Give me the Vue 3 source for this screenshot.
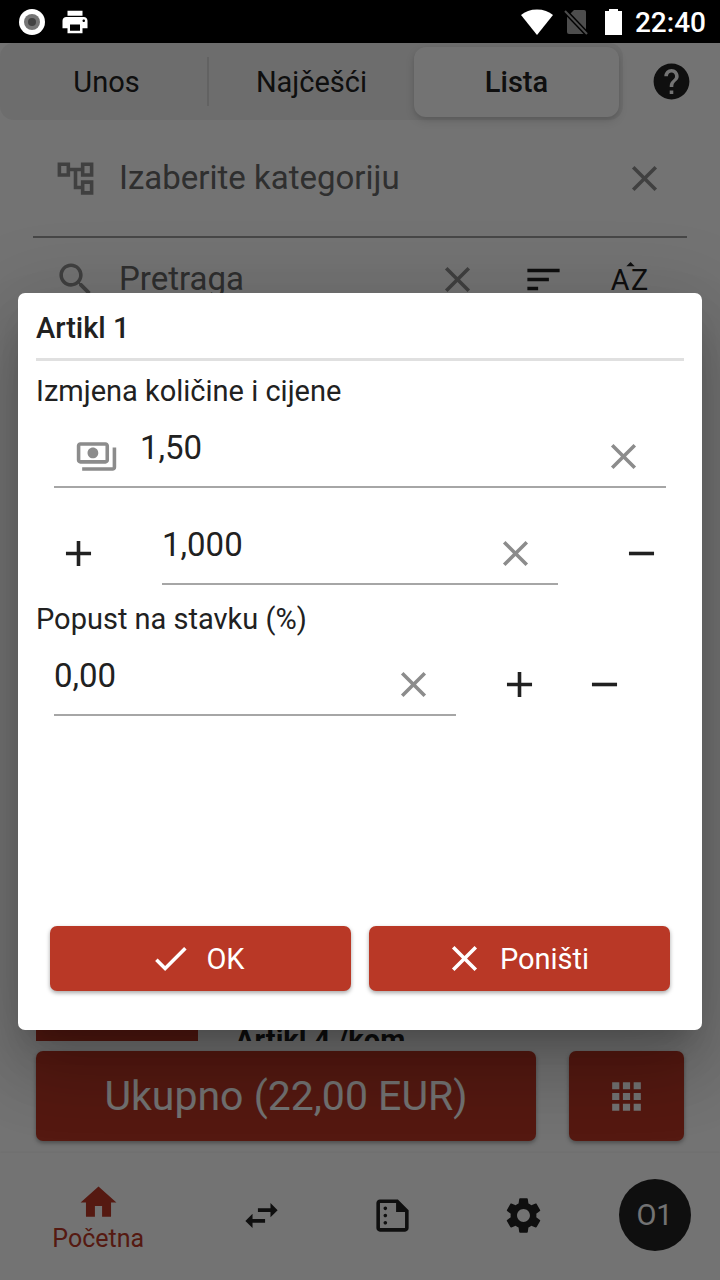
<script setup>
import { ref } from 'vue'

const price = ref('1,50')
const quantity = ref('1,000')
const discount = ref('0,00')
const category = ref('')
const search = ref('')
const activeTab = ref('Lista')
const tabs = ['Unos', 'Najčešći', 'Lista']

const icons = {
  close: 'M19 6.41 17.59 5 12 10.59 6.41 5 5 6.41 10.59 12 5 17.59 6.41 19 12 13.41 17.59 19 19 17.59 13.41 12z',
  add: 'M19 13h-6v6h-2v-6H5v-2h6V5h2v6h6z',
  remove: 'M19 13H5v-2h14z',
  check: 'M9 16.17 4.83 12l-1.42 1.41L9 19 21 7l-1.41-1.41z',
  help: 'M12 2C6.48 2 2 6.48 2 12s4.48 10 10 10 10-4.48 10-10S17.52 2 12 2zm1 17h-2v-2h2v2zm2.07-7.75-.9.92C13.45 12.9 13 13.5 13 15h-2v-.5c0-1.1.45-2.1 1.17-2.83l1.24-1.26c.37-.36.59-.86.59-1.41 0-1.1-.9-2-2-2s-2 .9-2 2H8c0-2.21 1.79-4 4-4s4 1.79 4 4c0 .88-.36 1.68-.93 2.25z',
  tree: 'M22 11V3h-7v3H9V3H2v8h7V8h2v10h4v3h7v-8h-7v3h-2V8h2v3h7zM7 9H4V5h3v4zm10 6h3v4h-3v-4zm0-10h3v4h-3V5z',
  search: 'M15.5 14h-.79l-.28-.27C15.41 12.59 16 11.11 16 9.5 16 5.91 13.09 3 9.5 3S3 5.91 3 9.5 5.91 16 9.5 16c1.61 0 3.09-.59 4.23-1.57l.27.28v.79l5 4.99L20.49 19l-4.99-5zm-6 0C7.01 14 5 11.99 5 9.5S7.01 5 9.5 5 14 7.01 14 9.5 11.99 14 9.5 14z',
  sort: 'M3 18h6v-2H3v2zM3 6v2h18V6H3zm0 7h12v-2H3v2z',
  payments: 'M19 14V6c0-1.1-.9-2-2-2H3c-1.1 0-2 .9-2 2v8c0 1.1.9 2 2 2h14c1.1 0 2-.9 2-2zm-2 0H3V6h14v8zm-7-7c-1.66 0-3 1.34-3 3s1.34 3 3 3 3-1.34 3-3-1.34-3-3-3zm13 0v11c0 1.1-.9 2-2 2H4v-2h17V7h2z',
  apps: 'M4 8h4V4H4v4zm6 12h4v-4h-4v4zm-6 0h4v-4H4v4zm0-6h4v-4H4v4zm6 0h4v-4h-4v4zm6-10v4h4V4h-4zm-6 4h4V4h-4v4zm6 6h4v-4h-4v4zm0 6h4v-4h-4v4z',
  home: 'M10 20v-6h4v6h5v-8h3L12 3 2 12h3v8z',
  swap: 'M6.99 11 3 15l3.99 4v-3H14v-2H6.99v-3zM21 9l-3.99-4v3H10v2h7.01v3L21 9z',
  report: 'M15 3H5c-1.1 0-2 .9-2 2v14c0 1.1.9 2 2 2h14c1.1 0 2-.9 2-2V9l-6-6zM5 19V5h9v5h5v9H5zM9 8c0 .55-.45 1-1 1s-1-.45-1-1 .45-1 1-1 1 .45 1 1zm0 4c0 .55-.45 1-1 1s-1-.45-1-1 .45-1 1-1 1 .45 1 1zm0 4c0 .55-.45 1-1 1s-1-.45-1-1 .45-1 1-1 1 .45 1 1z',
  settings: 'M19.14 12.94c.04-.3.06-.61.06-.94 0-.32-.02-.64-.07-.94l2.03-1.58c.18-.14.23-.41.12-.61l-1.92-3.32c-.12-.22-.37-.29-.59-.22l-2.39.96c-.5-.38-1.03-.7-1.62-.94l-.36-2.54c-.04-.24-.24-.41-.48-.41h-3.84c-.24 0-.43.17-.47.41l-.36 2.54c-.59.24-1.13.57-1.62.94l-2.39-.96c-.22-.08-.47 0-.59.22L2.74 8.87c-.12.21-.08.47.12.61l2.03 1.58c-.05.3-.09.63-.09.94s.02.64.07.94l-2.03 1.58c-.18.14-.23.41-.12.61l1.92 3.32c.12.22.37.29.59.22l2.39-.96c.5.38 1.03.7 1.62.94l.36 2.54c.05.24.24.41.48.41h3.84c.24 0 .44-.17.47-.41l.36-2.54c.59-.24 1.13-.56 1.62-.94l2.39.96c.22.08.47 0 .59-.22l1.92-3.32c.12-.22.07-.47-.12-.61l-2.01-1.58zM12 15.6c-1.98 0-3.6-1.62-3.6-3.6s1.62-3.6 3.6-3.6 3.6 1.62 3.6 3.6-1.62 3.6-3.6 3.6z',
  print: 'M19 8H5c-1.66 0-3 1.34-3 3v6h4v4h12v-4h4v-6c0-1.66-1.34-3-3-3zm-3 11H8v-5h8v5zm3-7c-.55 0-1-.45-1-1s.45-1 1-1 1 .45 1 1-.45 1-1 1zm-1-9H6v4h12V3z'
}
</script>

<template>
  <div class="page">
    <header class="status">
      <svg class="s-icon" viewBox="0 0 26 26" aria-hidden="true">
        <circle cx="13" cy="13" r="13" fill="#fff" />
        <circle cx="13" cy="13" r="8" fill="#757575" />
        <circle cx="13" cy="13" r="4" fill="#424242" />
      </svg>
      <svg class="s-print" viewBox="0 0 24 24" aria-hidden="true"><path :d="icons.print" /></svg>
      <span class="spacer"></span>
      <svg class="s-wifi" viewBox="0 0 32 26" aria-hidden="true"><path d="M16 26 0 6C4 2.500 9.500.5 16 .5S28 2.500 32 6z" /></svg>
      <svg class="s-sim" viewBox="0 0 24 26" aria-hidden="true">
        <path d="M10 1h10q2 0 2 2v21q0 1-1 1H5q-2 0-2-2V8z" fill="#4d4d4d" />
        <path d="M1 2 23 25" stroke="#000" stroke-width="5" />
        <path d="M1 2 23 25" stroke="#4d4d4d" stroke-width="2" />
      </svg>
      <svg class="s-batt" viewBox="0 0 17 26" aria-hidden="true"><path d="M4 0h9v2h4v24H0V2h4z" /></svg>
      <time class="clock">22:40</time>
    </header>

    <div class="screen">
      <main class="app">
        <div class="top">
          <div class="tabs" role="tablist">
            <button
              v-for="t in tabs"
              :key="t"
              type="button"
              role="tab"
              class="tab"
              :class="{ active: t === activeTab }"
              :aria-selected="t === activeTab"
              @click="activeTab = t"
            >{{ t }}</button>
          </div>
          <button type="button" class="icon-btn dark" aria-label="Pomoć">
            <svg class="icon" viewBox="0 0 24 24"><path :d="icons.help" /></svg>
          </button>
        </div>

        <div class="filter category">
          <svg class="icon" viewBox="0 0 24 24" aria-hidden="true"><path :d="icons.tree" /></svg>
          <input v-model="category" class="filter-input" type="text" placeholder="Izaberite kategoriju" aria-label="Izaberite kategoriju" />
          <button type="button" class="icon-btn" aria-label="Obriši" @click="category = ''">
            <svg class="icon" viewBox="0 0 24 24"><path :d="icons.close" /></svg>
          </button>
        </div>
        <div class="filter search">
          <svg class="icon" viewBox="0 0 24 24" aria-hidden="true"><path :d="icons.search" /></svg>
          <input v-model="search" class="filter-input" type="text" placeholder="Pretraga" aria-label="Pretraga" />
          <div class="actions">
            <button type="button" class="icon-btn" aria-label="Obriši" @click="search = ''">
              <svg class="icon" viewBox="0 0 24 24"><path :d="icons.close" /></svg>
            </button>
            <button type="button" class="icon-btn dark" aria-label="Poredaj">
              <svg class="icon" viewBox="0 0 24 24"><path :d="icons.sort" /></svg>
            </button>
            <button type="button" class="icon-btn dark" aria-label="Poredaj po abecedi">
              <svg class="icon az" viewBox="0 0 24 24">
                <path d="M14.940 4.660h-4.720l2.360-2.360z" />
                <text x="1.500" y="17.700">A</text>
                <text x="12.800" y="17.700">Z</text>
              </svg>
            </button>
          </div>
        </div>

        <div class="list">
          <div class="item">
            <div class="thumb"></div>
            <strong class="item-name">Artikl 4 /kom</strong>
          </div>
        </div>

        <div class="totals">
          <button type="button" class="primary total">Ukupno (22,00 EUR)</button>
          <button type="button" class="primary grid-btn" aria-label="Mreža">
            <svg class="icon" viewBox="0 0 24 24"><path :d="icons.apps" /></svg>
          </button>
        </div>

        <nav class="nav">
          <a href="#" class="nav-item home">
            <svg class="icon" viewBox="0 0 24 24" aria-hidden="true"><path :d="icons.home" /></svg>
            <span>Početna</span>
          </a>
          <a href="#" class="nav-item" aria-label="Promet"><svg class="icon" viewBox="0 0 24 24"><path :d="icons.swap" /></svg></a>
          <a href="#" class="nav-item" aria-label="Izvještaji"><svg class="icon" viewBox="0 0 24 24"><path :d="icons.report" /></svg></a>
          <a href="#" class="nav-item" aria-label="Postavke"><svg class="icon" viewBox="0 0 24 24"><path :d="icons.settings" /></svg></a>
          <a href="#" class="nav-item"><span class="avatar">O1</span></a>
        </nav>
      </main>

      <div class="overlay">
        <section class="dialog" role="dialog" aria-modal="true" aria-labelledby="dialog-title">
          <h2 id="dialog-title" class="title">Artikl 1</h2>
          <hr class="rule" />
          <label class="label" for="price">Izmjena količine i cijene</label>
          <div class="field price">
            <svg class="icon lead" viewBox="0 0 24 24" aria-hidden="true"><path :d="icons.payments" /></svg>
            <input id="price" v-model="price" class="value" type="text" inputmode="decimal" />
            <button type="button" class="icon-btn" aria-label="Obriši" @click="price = ''">
              <svg class="icon" viewBox="0 0 24 24"><path :d="icons.close" /></svg>
            </button>
          </div>
          <div class="row quantity">
            <button type="button" class="icon-btn dark" aria-label="Povećaj količinu">
              <svg class="icon" viewBox="0 0 24 24"><path :d="icons.add" /></svg>
            </button>
            <div class="field">
              <input v-model="quantity" class="value" type="text" inputmode="decimal" aria-label="Količina" />
              <button type="button" class="icon-btn" aria-label="Obriši" @click="quantity = ''">
                <svg class="icon" viewBox="0 0 24 24"><path :d="icons.close" /></svg>
              </button>
            </div>
            <button type="button" class="icon-btn dark" aria-label="Smanji količinu">
              <svg class="icon" viewBox="0 0 24 24"><path :d="icons.remove" /></svg>
            </button>
          </div>
          <label class="label" for="discount">Popust na stavku (%)</label>
          <div class="row discount">
            <div class="field">
              <input id="discount" v-model="discount" class="value" type="text" inputmode="decimal" />
              <button type="button" class="icon-btn" aria-label="Obriši" @click="discount = ''">
                <svg class="icon" viewBox="0 0 24 24"><path :d="icons.close" /></svg>
              </button>
            </div>
            <button type="button" class="icon-btn dark" aria-label="Povećaj popust">
              <svg class="icon" viewBox="0 0 24 24"><path :d="icons.add" /></svg>
            </button>
            <button type="button" class="icon-btn dark" aria-label="Smanji popust">
              <svg class="icon" viewBox="0 0 24 24"><path :d="icons.remove" /></svg>
            </button>
          </div>
          <div class="buttons">
            <button type="button" class="primary">
              <svg class="icon" viewBox="0 0 24 24" aria-hidden="true"><path :d="icons.check" /></svg>
              <span>OK</span>
            </button>
            <button type="button" class="primary">
              <svg class="icon" viewBox="0 0 24 24" aria-hidden="true"><path :d="icons.close" /></svg>
              <span>Poništi</span>
            </button>
          </div>
        </section>
      </div>
    </div>
  </div>
</template>

<style>
body {
  margin: 0;
}
</style>

<style scoped>
.page {
  display: flex;
  flex-direction: column;
  min-height: 100vh;
  font-family: Roboto, "Liberation Sans", sans-serif;
  font-size: 29px;
  line-height: 34px;
  color: #212121;
}
.page *,
.page {
  box-sizing: border-box;
}
button,
input {
  font: inherit;
  color: inherit;
  border: 0;
  background: none;
  padding: 0;
  margin: 0;
  outline: none;
}
button {
  cursor: pointer;
}
.icon {
  display: block;
  flex: none;
  width: 43px;
  height: 43px;
  fill: currentColor;
}
.icon-btn {
  flex: none;
  color: #8c8c8c;
}
.dark {
  color: #212121;
}

/* status bar */
.status {
  display: flex;
  align-items: center;
  height: 43px;
  padding: 0 14px 0 19px;
  background: #000;
  color: #fff;
  fill: #fff;
}
.s-icon {
  width: 26px;
  height: 26px;
}
.s-print {
  width: 30px;
  height: 30px;
  margin-left: 15px;
}
.spacer {
  flex: 1;
}
.s-wifi {
  width: 32px;
  height: 26px;
}
.s-sim {
  width: 24px;
  height: 26px;
  margin-left: 11px;
}
.s-batt {
  width: 17px;
  height: 26px;
  margin: 0 13px 0 17px;
}
.clock {
  font-size: 28px;
  font-weight: 500;
  padding-top: 3px;
}

/* app screen */
.screen {
  position: relative;
  flex: 1;
  display: flex;
  flex-direction: column;
}
.app {
  flex: 1;
  display: flex;
  flex-direction: column;
  background: #fafafa;
}
.top {
  display: flex;
  align-items: center;
  padding-right: 27px;
  gap: 27px;
}
.tabs {
  flex: 1;
  display: flex;
  height: 77px;
  padding: 4px 4px 3px;
  border-radius: 14px;
  background: #ededed;
}
.tab {
  flex: 1;
  position: relative;
  border-radius: 12px;
}
.tab:first-child::after {
  content: "";
  position: absolute;
  top: 10px;
  bottom: 11px;
  right: 0;
  width: 2px;
  background: #d6d6d6;
}
.tab.active {
  font-weight: 500;
  background: #fafafa;
  box-shadow: 0 4px 10px rgba(0, 0, 0, 0.12), 0 2px 4px rgba(0, 0, 0, 0.08);
}
.filter {
  display: flex;
  align-items: center;
  margin: 0 33px;
  padding: 0 21px;
  color: #8c8c8c;
}
.category {
  height: 118px;
  border-bottom: 2px solid #9c9c9c;
}
.search {
  height: 82px;
  padding-right: 36px;
}
.actions {
  display: flex;
  gap: 43px;
}
.filter-input {
  flex: 1;
  min-width: 0;
  margin-left: 22px;
  font-size: 33px;
  line-height: 40px;
}
.filter-input::placeholder {
  color: #666;
  opacity: 1;
}
.az {
  font-family: Roboto, sans-serif;
  font-size: 16px;
  font-weight: 400;
}
.list {
  flex: 1;
  display: flex;
  flex-direction: column;
  justify-content: flex-end;
  overflow: hidden;
}
.item {
  display: flex;
  gap: 37px;
  height: 18px;
  padding: 0 36px;
}
.thumb {
  width: 162px;
  background: #b93826;
}
.item-name {
  font-weight: 700;
}
.primary {
  display: flex;
  align-items: center;
  justify-content: center;
  border-radius: 7px;
  background: #b93826;
  color: #fff;
  box-shadow: 0 2px 4px rgba(0, 0, 0, 0.35);
}
.totals {
  display: flex;
  gap: 33px;
  padding: 10px 36px 12px;
  background: #fafafa;
  position: relative;
}
.totals .primary {
  height: 90px;
  color: #fafafa;
}
.total {
  flex: 1;
  font-size: 41px;
}
.grid-btn {
  width: 115px;
}
.nav {
  display: grid;
  grid-template-columns: 3fr 2fr 2fr 2fr 2fr;
  height: 127px;
  background: #fafafa;
  box-shadow: 0 -1px 2px rgba(0, 0, 0, 0.04);
  position: relative;
}
.nav-item {
  display: flex;
  flex-direction: column;
  align-items: center;
  justify-content: center;
  padding-bottom: 3px;
  color: #212121;
  text-decoration: none;
}
.home {
  padding-bottom: 0;
  color: #b93826;
  font-size: 25px;
  line-height: 29px;
}
.avatar {
  display: flex;
  align-items: center;
  justify-content: center;
  width: 72px;
  height: 72px;
  border-radius: 50%;
  background: #212121;
  color: #fafafa;
}

/* dialog */
.overlay {
  position: absolute;
  inset: 0;
  display: flex;
  align-items: center;
  padding: 18px;
  background: rgba(0, 0, 0, 0.54);
}
.dialog {
  flex: 1;
  min-width: 0;
  padding: 18px;
  border-radius: 7px;
  background: #fff;
  box-shadow:
    0 20px 27px -13px rgba(0, 0, 0, 0.2),
    0 43px 68px 5px rgba(0, 0, 0, 0.14),
    0 16px 83px 14px rgba(0, 0, 0, 0.12);
}
.title {
  margin: 0;
  font-size: 29px;
  font-weight: 500;
}
.rule {
  height: 3px;
  margin: 13px 0;
  border: 0;
  background: #e0e0e0;
}
.label {
  display: block;
}
.field {
  display: flex;
  align-items: flex-end;
  min-width: 0;
  height: 80px;
  padding-right: 21px;
  border-bottom: 2px solid #a6a6a6;
}
.field .icon-btn,
.lead {
  margin-bottom: 8px;
}
.value {
  flex: 1;
  align-self: stretch;
  min-width: 0;
  padding-top: 2px;
  font-size: 33px;
}
.price {
  margin: 0 18px;
  padding-left: 21px;
}
.lead {
  margin-right: 22px;
  color: #8c8c8c;
}
.row {
  display: flex;
  align-items: flex-end;
}
.row .field {
  flex: 1;
}
.row > .icon-btn {
  margin-bottom: 10px;
}
.quantity {
  gap: 62px;
  margin: 17px 21px;
}
.discount {
  gap: 42px;
  margin: 0 58px 0 18px;
}
.buttons {
  display: flex;
  gap: 18px;
  margin: 210px 14px 21px;
}
.buttons .primary {
  flex: 1;
  height: 65px;
  gap: 14px;
  padding-right: 7px;
}
</style>
